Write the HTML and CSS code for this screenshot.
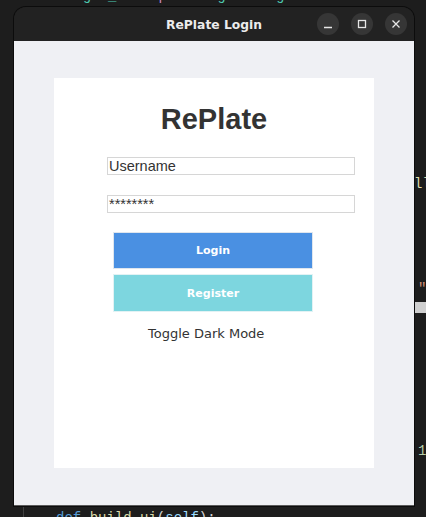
FILE: index.html
```html
<!DOCTYPE html>
<html>
<head>
<meta charset="utf-8">
<link rel="stylesheet" href="styles.css">
</head>
<body>
<div class="desktop">
  <div class="code code-top"><span class="kw">from</span> <span class="mod">login_bl</span> <span class="kw">import</span> <span class="mod">LoginManager</span></div>
  <div class="code code-bottom"><span class="def">def</span> <span class="fn">build_ui</span>(<span class="self">self</span>):</div>
  <div class="guide"></div>
  <div class="code frag frag-ll">ll</div>
  <div class="code frag frag-q">"</div>
  <div class="frag-box"></div>
  <div class="code frag frag-1">1</div>

  <div class="window">
    <div class="titlebar">
      <div></div>
      <div class="title">RePlate Login</div>
      <div class="controls">
        <span class="ctl"><svg width="22" height="22" viewBox="0 0 22 22"><line x1="7" y1="14.5" x2="15" y2="14.5" stroke="#e6e6e6" stroke-width="1.3"/></svg></span>
        <span class="ctl"><svg width="22" height="22" viewBox="0 0 22 22"><rect x="7.5" y="7.5" width="7" height="7" fill="none" stroke="#e6e6e6" stroke-width="1.3"/></svg></span>
        <span class="ctl"><svg width="22" height="22" viewBox="0 0 22 22"><path d="M7.5 7.5 L14.5 14.5 M14.5 7.5 L7.5 14.5" stroke="#e6e6e6" stroke-width="1.3"/></svg></span>
      </div>
    </div>
    <div class="content">
      <div class="card">
        <div class="brand">RePlate</div>
        <div class="entry">Username</div>
        <div class="entry pw">********</div>
        <div class="btn login">Login</div>
        <div class="btn register">Register</div>
        <div class="toggle">Toggle Dark Mode</div>
      </div>
    </div>
  </div>
</div>
</body>
</html>
```
FILE: styles.css
```css
html, body {
  margin: 0;
  padding: 0;
  background: #1d1d1d;
}
.desktop {
  position: relative;
  width: 426px;
  height: 517px;
  overflow: hidden;
  background: #1d1d1d;
}
.code {
  position: absolute;
  font-family: "Liberation Mono", monospace;
  font-size: 14px;
  line-height: 16px;
  white-space: pre;
  color: #d4d4d4;
}
.code-top { left: 24px; top: -12px; }
.code-bottom { left: 56px; top: 510px; }
.kw { color: #c586c0; }
.mod { color: #4ec9b0; }
.def { color: #569cd6; }
.fn { color: #dcdcaa; }
.self { color: #9cdcfe; }
.guide {
  position: absolute;
  left: 23px;
  top: 506px;
  width: 1px;
  height: 11px;
  background: #404040;
}
.frag-ll { left: 414px; top: 176px; color: #dcdcaa; }
.frag-q { left: 418px; top: 281px; color: #ce9178; }
.frag-1 { left: 418px; top: 443px; color: #b5cea8; }
.frag-box {
  position: absolute;
  left: 415px;
  top: 302px;
  width: 11px;
  height: 11px;
  background: #cfcfcf;
}
.window {
  position: absolute;
  left: 14px;
  top: 7px;
  width: 400px;
  height: 499px;
  display: flex;
  flex-direction: column;
  border-radius: 12px 12px 0 0;
  overflow: hidden;
  box-shadow: 0 0 0 1px #0c0c0c;
}
.titlebar {
  height: 34px;
  flex: none;
  background: #222222;
  display: grid;
  grid-template-columns: 1fr auto 1fr;
  align-items: center;
}
.title {
  font-family: "DejaVu Sans", sans-serif;
  font-weight: bold;
  font-size: 12.3px;
  color: #ececec;
  padding-top: 1px;
}
.controls {
  display: flex;
  justify-content: flex-end;
  gap: 12px;
  padding-right: 7px;
}
.ctl {
  width: 22px;
  height: 22px;
  border-radius: 50%;
  background: #363636;
  display: flex;
}
.content {
  flex: 1;
  background: #eff0f4;
  padding: 37px 40px;
  border-bottom: 1px solid #5a5a5a;
  display: flex;
}
.card {
  flex: 1;
  background: #ffffff;
}
.brand {
  margin-top: 24px;
  height: 34px;
  line-height: 34px;
  text-align: center;
  font-family: "Liberation Sans", sans-serif;
  font-weight: bold;
  font-size: 29px;
  color: #333333;
}
.entry {
  margin: 21px 0 0 53px;
  width: 245px;
  height: 16px;
  border: 1px solid #d6d6d6;
  font-family: "Liberation Sans", sans-serif;
  font-size: 14.5px;
  line-height: 16px;
  color: #333333;
  padding-left: 1px;
}
.entry.pw {
  margin-top: 20px;
}
.btn {
  margin-left: 59px;
  width: 198px;
  border: 1px solid #dfe6ee;
  color: #ffffff;
  font-family: "DejaVu Sans", sans-serif;
  font-weight: bold;
  font-size: 11px;
  display: flex;
  align-items: center;
  justify-content: center;
}
.login {
  margin-top: 19px;
  height: 35px;
  background: #4a90e2;
}
.register {
  margin-top: 5px;
  height: 36px;
  background: #7dd6df;
  border-color: #e2f2f4;
}
.toggle {
  margin-top: 14px;
  padding-left: 94px;
  font-family: "DejaVu Sans", sans-serif;
  font-size: 13px;
  line-height: 16px;
  color: #333333;
}
```
